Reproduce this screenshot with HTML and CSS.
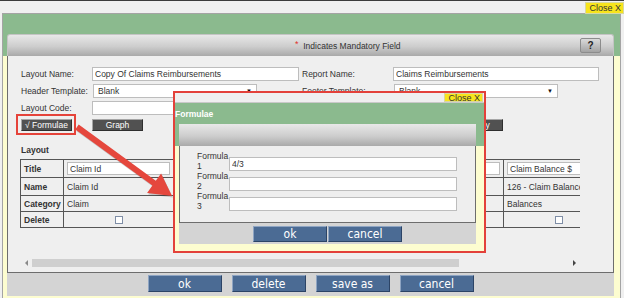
FILE: index.html
```html
<!DOCTYPE html>
<html lang="en">
<head>
  <meta charset="UTF-8">
  <meta name="viewport" content="width=device-width,initial-scale=1">
  <title>Report Layout</title>
  <link rel="stylesheet" href="styles.css">
</head>
<body>

  <div class="topbar"><span class="close-x">Close X</span></div>

  <!-- Main layout dialog -->
  <div class="dialog">
    <div class="dialog-head"></div>
    <div class="panel">
      <div class="panel-head">
        <span class="req">*</span>&nbsp; Indicates Mandatory Field
        <button class="help">?</button>
      </div>
      <div class="panel-body">
        <div class="fields">
          <label>Layout Name:</label>
          <input class="txt" value="Copy Of Claims Reimbursements">
          <label>Report Name:</label>
          <input class="txt" value="Claims Reimbursements">
          <label>Header Template:</label>
          <div class="sel">Blank<span class="caret">▼</span></div>
          <label>Footer Template:</label>
          <div class="sel">Blank<span class="caret">▼</span></div>
          <label>Layout Code:</label>
          <input class="txt">
        </div>

        <div class="tools">
          <button class="dark">√ Formulae</button>
          <button class="dark">Graph</button>
          <button class="dark ready">Ready</button>
        </div>

        <div class="section">Layout</div>

        <div class="scroller">
          <div class="view">
            <table class="grid">
              <colgroup>
                <col class="c-head"><col class="c-data"><col class="c-data"><col class="c-data"><col class="c-data"><col class="c-data">
              </colgroup>
              <tr class="r-title">
                <th>Title</th>
                <td><input class="cell-in" value="Claim Id"></td>
                <td><input class="cell-in" value="Claim Date"></td>
                <td><input class="cell-in" value="Claim Amount $"></td>
                <td><input class="cell-in" value="Claim Paid $"></td>
                <td><input class="cell-in" value="Claim Balance $"></td>
              </tr>
              <tr class="r-name">
                <th>Name</th>
                <td>Claim Id</td>
                <td>Claim Date</td>
                <td>123 - Claim Amount</td>
                <td>124 - Claim Paid</td>
                <td>126 - Claim Balance</td>
              </tr>
              <tr class="r-cat">
                <th>Category</th>
                <td>Claim</td>
                <td>Claim</td>
                <td>Amounts</td>
                <td>Payments</td>
                <td>Balances</td>
              </tr>
              <tr class="r-del">
                <th>Delete</th>
                <td class="mid"><span class="chk"></span></td>
                <td class="mid"><span class="chk"></span></td>
                <td class="mid"><span class="chk"></span></td>
                <td class="mid"><span class="chk"></span></td>
                <td class="mid"><span class="chk"></span></td>
              </tr>
            </table>
          </div>
          <div class="hbar">
            <span class="arr left"></span>
            <span class="thumb"></span>
            <span class="arr right"></span>
          </div>
        </div>
      </div>
    </div>
    <div class="actions">
      <button class="blue">ok</button>
      <button class="blue">delete</button>
      <button class="blue">save as</button>
      <button class="blue">cancel</button>
    </div>
  </div>

  <!-- Formulae popup -->
  <div class="modal">
    <div class="m-top"><span class="close-x">Close X</span></div>
    <div class="m-main">
      <div class="m-title">Formulae</div>
      <div class="m-panel">
        <div class="m-panel-head"></div>
        <div class="m-body">
          <div class="f-row"><label>Formula 1</label><input class="f-in" value="4/3"></div>
          <div class="f-row"><label>Formula 2</label><input class="f-in"></div>
          <div class="f-row"><label>Formula 3</label><input class="f-in"></div>
        </div>
        <div class="m-actions">
          <button class="blue">ok</button>
          <button class="blue">cancel</button>
        </div>
      </div>
    </div>
  </div>

  <!-- annotation -->
  <div class="callout"></div>
  <svg class="arrow" width="624" height="298" viewBox="0 0 624 298">
    <polygon fill="rgba(0,0,0,0.18)" transform="translate(1,1.5)" points="78.7,124.6 155.8,180.8 161.1,173.4 172,196 147.1,193 152.4,185.6 75.3,129.4"/>
    <polygon fill="#e5473d" points="78.7,124.6 155.8,180.8 161.1,173.4 172,196 147.1,193 152.4,185.6 75.3,129.4"/>
  </svg>

</body>
</html>
```

FILE: styles.css
```css
*{margin:0;padding:0;box-sizing:border-box;}
html,body{height:100%;overflow:hidden;}
body{
  position:relative;
  background:#f0f0f0;
  font-family:"Liberation Sans",Arial,sans-serif;
  font-size:8.5px; color:#333;
}
input,button{font:inherit;color:inherit;}

/* top strip */
.topbar{
  height:13px; border-top:1px solid #3c3c3c;
  display:flex; justify-content:flex-end; align-items:flex-start;
  padding-top:1px;
}
.close-x{
  background:#f7e41c; color:#333;
  font-size:9px; line-height:10px;
  padding:0 2px 0 3px; border:1px solid #d8d8a0;
}

/* main dialog */
.dialog{
  margin-left:2px; width:619px; height:285px;
  border:1px solid #a4a4a4; border-bottom:none;
  background:linear-gradient(#8bba8e 42px,#fdfdd0 42px);
}
.dialog-head{height:20px;}
.panel{margin:0 6px 0 4px;}
.panel-head{
  height:22px; display:flex; align-items:center;
  padding-left:287px;
  background:linear-gradient(#e8e8e8,#cdcdcd 55%,#a9a9a9);
  border-radius:3px 3px 0 0;
  border:1px solid #c4c4c4; border-bottom:none;
}
.req{color:#e0322c;font-size:9px;position:relative;top:-2px;}
.help{
  margin-left:auto; margin-right:12px;
  width:21px; height:15px;
  border:1px solid #8c8c8c; border-radius:2px;
  background:linear-gradient(#dadada,#a3a3a3);
  font-weight:bold; font-size:10px; color:#222;
}
.panel-body{
  background:#efefef;
  border:1px solid #6d6d6d; border-top:none;
  padding:11px 0 4px 13px;
}

.fields{
  display:grid;
  grid-template-columns:71px 210px 91px 206px;
  grid-auto-rows:14px; row-gap:3px;
}
.fields label{align-self:center;}
.txt{
  width:207px; height:14px;
  background:#fff; border:1px solid #bdbdbd;
  padding:0 2px;
}
.fields .txt:nth-of-type(2){width:206px;}
.sel{
  width:164px; height:14px; margin-left:1px;
  background:#fff; border:1px solid #bdbdbd;
  padding:0 4px; line-height:12px;
  display:flex; justify-content:space-between;
}
.caret{font-size:6px;color:#111;}

.tools{display:flex;margin-top:4px;gap:20px;}
.dark{
  width:51px; height:12px; line-height:10px;
  background:#515151; color:#fff;
  border:1px solid; border-color:#a6a6a6 #2e2e2e #2e2e2e #a6a6a6;
}
.ready{margin-left:289px;}

.section{font-weight:bold;margin-top:14px;line-height:10px;}

.scroller{width:560px;margin:4px 0 0 -1px;}
.view{height:99px;overflow:hidden;}
.grid{border-collapse:collapse;table-layout:fixed;width:594px;}
.c-head{width:43px;}
.c-data{width:110px;}
.grid th,.grid td{
  border:1px solid #555;
  padding:0 3px; text-align:left;
  white-space:nowrap; overflow:hidden;
}
.grid th{font-weight:bold;}
.r-title,.r-name{height:18px;}
.r-cat,.r-del{height:16px;}
.cell-in{
  width:100%; height:13px; display:block;
  background:#fff; border:1px solid #bdbdbd; padding:0 2px;
}
.mid{text-align:center !important;}
.chk{
  display:inline-block; width:8px; height:8px; vertical-align:middle;
  background:#fff; border:1px solid #7f8ea6;
}

.hbar{height:10px;display:flex;align-items:center;}
.arr{width:0;height:0;border-top:3px solid transparent;border-bottom:3px solid transparent;}
.arr.left{margin-left:5px;border-right:3px solid #8a8a8a;}
.arr.right{margin-left:auto;margin-right:4px;border-left:3px solid #444;}
.thumb{margin-left:4px;width:427px;height:8px;background:#cfcfcf;}

.actions{
  margin:0 6px 0 4px; height:23px;
  background:#d4d4d4;
  display:flex; justify-content:center; gap:10px;
  padding-top:2px;
}
.blue{
  width:74px; height:17px;
  background:#4b6b94; color:#fff;
  border:1px solid; border-color:#8ea4c2 #2c4466 #2c4466 #8ea4c2;
  font-family:"DejaVu Sans Condensed","DejaVu Sans",sans-serif;
  font-stretch:condensed; font-size:12px; line-height:14px;
}

/* formulae popup */
.modal{
  position:absolute; left:173px; top:91px;
  width:313px; height:162px;
  border:2px solid #e3413a;
  background:#fdfdd0;
}
.m-top{
  height:10px; background:#efefef;
  border-bottom:1px solid #c9c9c9;
  display:flex; justify-content:flex-end;
}
.m-top .close-x{margin-right:1px;line-height:8px;padding-top:0;}
.m-main{background:linear-gradient(#8bba8e 43px,#fdfdd0 43px);height:148px;}
.m-title{
  height:21px; padding-top:6px;
  color:#fff; font-weight:bold; line-height:10px;
}
.m-panel{margin:0 8px 0 4px;}
.m-panel-head{
  height:22px;
  background:linear-gradient(#e8e8e8,#cdcdcd 55%,#a9a9a9);
}
.m-body{
  height:77px; background:#eeeeee;
  border:1px solid #6d6d6d; border-top:none;
  padding:5px 0 0 17px;
}
.f-row{display:flex;align-items:flex-end;height:20px;}
.f-row label{width:32px;line-height:10px;}
.f-in{
  width:228px; height:14px;
  background:#fff; border:1px solid #bdbdbd; padding:0 2px;
}
.m-actions{
  height:21px; background:#d4d4d4;
  display:flex; justify-content:center; gap:1px;
  padding-top:3px;
}
.m-actions .blue{height:16px;line-height:13px;}

/* red annotation */
.callout{
  position:absolute; left:16px; top:114px;
  width:60px; height:21px;
  border:2px solid #e5433a;
}
.arrow{position:absolute;left:0;top:0;pointer-events:none;}
```
